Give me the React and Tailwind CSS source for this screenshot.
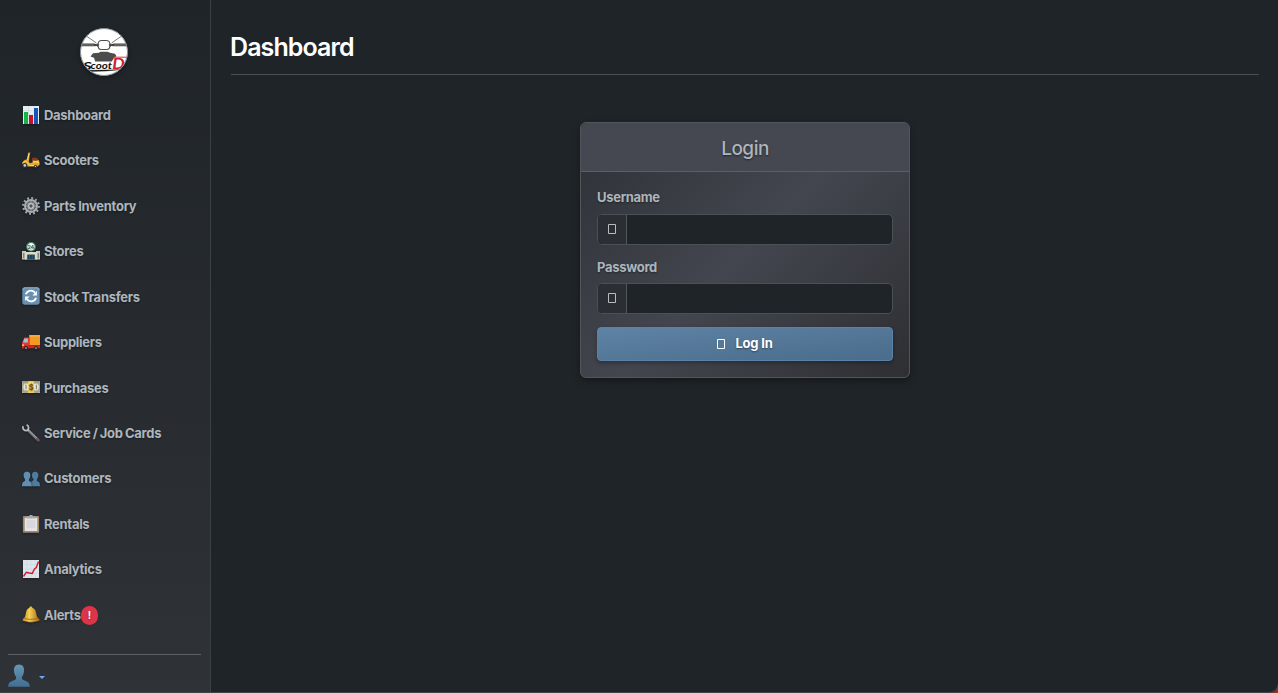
import React from "react";

function Icon({ children, className = "h-[18px] w-[18px]" }) {
  return (
    <svg viewBox="0 0 18 18" className={`${className} shrink-0 drop-shadow-[0_1px_1px_rgba(0,0,0,0.35)]`} fill="none">
      {children}
    </svg>
  );
}

const ChartBars = () => (
  <Icon>
    <path d="M1 0h16v18H1z" fill="#e6eef2" />
    <path d="M1 4.5h16M1 9h16M1 13.5h16M6.5 0v18M12 0v18" stroke="#c9d7df" strokeWidth=".5" />
    <path d="M2 6h4v12H2z" fill="#17b544" />
    <path d="M7 9h4v9H7z" fill="#cc1026" />
    <path d="M12 2h4v16h-4z" fill="#1458b4" />
  </Icon>
);

const Scooter = () => (
  <Icon>
    <path d="M5.2 2.8L7 .8l2 .8-1.4 2z" fill="#6b5637" />
    <path d="M6.2 2.2h1.8L7.2 8 6.8 11c1.2 1.4 2.6 1 3.7.2L10.8 8l6 1 1.1 4.2-2.3 2.4H5L3.6 12.4 0 13.2C.4 10 2.5 8.8 4.8 8.6z" fill="#dfa42f" />
    <path d="M7 2.5L5.5 9M.8 12c2-2.5 4.2-2 5.2.7l1.5 1.7H15" stroke="#ffd976" strokeWidth="1" />
    <path d="M11.5 11.5c1.5-1.5 4-1.3 5.2.6" stroke="#ffd370" strokeWidth="1.4" />
    <path d="M9.6 8.6l.9-1.8h4.7l1 2.5-3 .8z" fill="#8a3b1b" />
    <circle cx="2.8" cy="14.4" r="2.5" fill="#30333a" /><circle cx="2.8" cy="14.4" r="1.3" fill="#c7cace" />
    <circle cx="13.5" cy="15.4" r="1.7" fill="#393231" /><circle cx="13.5" cy="15.4" r=".7" fill="#c7cace" />
  </Icon>
);

const Gear = () => (
  <Icon>
    <circle cx="9" cy="9" r="7.8" stroke="#a3a8ad" strokeWidth="2.2" strokeDasharray="1.9 2.184" />
    <circle cx="9" cy="9" r="5.9" stroke="#a9aeb3" strokeWidth="2.2" />
    <circle cx="9" cy="9" r="4.7" fill="#73787e" />
    <path d="M9 4v3M9 11v3M4 9h3m4 0h3M5.5 5.5l2.2 2.2m2.6 2.6 2.2 2.2m0-7-2.2 2.2m-2.6 2.6-2.2 2.2" stroke="#989ea5" />
    <circle cx="9" cy="9" r="2.3" fill="#4c5359" stroke="#c6cbcf" strokeWidth="1.2" />
  </Icon>
);

const Store = () => (
  <Icon>
    <path d="M0 9h4v8.6H0zM14 9h4v8.6h-4z" fill="#cac8b8" />
    <path d="M3 10h12v7.6H3z" fill="#ddd9c6" />
    <path d="M5.2 12.6h7.6v5H5.2z" fill="#1d4260" />
    <path d="M7.5 12.6v5M10.3 12.6v5" stroke="#3c6580" strokeWidth=".7" />
    <path d="M1.8 11v5.2M16.2 11v5.2" stroke="#5d6b70" strokeWidth="1" />
    <circle cx="9" cy="4.8" r="4.3" fill="#f4faf7" stroke="#3b8a60" strokeWidth="1.2" />
    <text x="9" y="6.5" textAnchor="middle" fontSize="5" fontWeight="700" letterSpacing="0" fill="#4b5560" className="font-['Inter',sans-serif]">24</text>
  </Icon>
);

const Transfer = () => (
  <Icon>
    <rect x=".3" y=".3" width="17.4" height="17.4" rx="2.7" fill="#6990b1" />
    <path d="M.8 3Q.8.8 3 .8h12q2.2 0 2.2 2.2" stroke="#a4c0d8" strokeWidth=".7" />
    <path d="M3.9 7.3C5 3.7 9 2.5 12 4.8l1 1M14.1 10.7c-1.1 3.6-5.1 4.8-8.1 2.5l-1-1" stroke="#fff" strokeWidth="1.9" />
    <path d="M14.9 4v4.5h-4.5zM3.1 14V9.5h4.5z" fill="#fff" />
  </Icon>
);

const Truck = () => (
  <Icon>
    <path d="M7.3 2.2H18v10H7.3z" fill="#f39a24" />
    <path d="M7.3 2.2H18v1.3H7.3z" fill="#ffb84a" />
    <path d="M2.2 4.4h5.1v10.8H0V10z" fill="#e5382f" />
    <path d="M2.4 5.6h3.5v3.9H1z" fill="#8ec9e1" />
    <path d="M0 12.3h18v2.9H0z" fill="#dc1f20" />
    <path d="M0 12.2h2" stroke="#ffe47b" strokeWidth="1.3" />
    <circle cx="4" cy="15.1" r="2" fill="#27292f" /><circle cx="14" cy="15.1" r="2" fill="#27292f" />
    <circle cx="4" cy="15.1" r=".8" fill="#bbc" /><circle cx="14" cy="15.1" r=".8" fill="#bbc" />
  </Icon>
);

const Money = () => (
  <Icon>
    <path d="M0 3.2h18v11.8H0z" fill="#b8b6a0" />
    <path d="M1 4.2h16v9.8H1z" stroke="#858976" strokeWidth=".7" />
    <circle cx="4.6" cy="9" r="3.2" fill="#e9e5d4" /><circle cx="13.6" cy="9" r="3.2" fill="#e9e5d4" />
    <path d="M4 6.7v4.5M14.4 6.7v4.5" stroke="#777a67" />
    <path d="M6.2 3.2h5.6V15H6.2z" fill="#f5d365" />
    <text x="9" y="11.8" textAnchor="middle" fontSize="7.5" fontWeight="700" fill="#6d4d17" className="font-['Inter',sans-serif]">$</text>
  </Icon>
);

const Wrench = () => (
  <Icon>
    <path d="M5.8 5.8L16.2 16.2" stroke="#969da6" strokeWidth="2.5" strokeLinecap="round" />
    <path d="M1.1 2.1Q.2 5.4 2.9 6.4 6.3 7.1 6.6 4.1 6.7 1.7 4.6.8" stroke="#b5bcc3" strokeWidth="1.7" />
    <path d="M6.8 7.3l8.5 8.5" stroke="#5c626b" strokeWidth=".9" />
    <path d="M14.8 14.9l1.7 1.7" stroke="#704950" strokeWidth="1.9" strokeLinecap="round" />
  </Icon>
);

const userPath = "M9 .3c3 0 4.5 2.2 4.1 5.3-.2 1.9-.8 3.3-1.7 4.3-.2 1.7.3 2.4 2.1 3 2.8.9 4.1 1.8 4.4 4.9H.1c.3-3.1 1.6-4 4.4-4.9 1.8-.6 2.3-1.3 2.1-3-.9-1-1.5-2.4-1.7-4.3C4.5 2.5 6 .3 9 .3z";

const Users = () => (
  <Icon>
    <path d="M13 2.8c3 0 3.8 2.2 3.2 5-.3 1.2-.8 2-1.3 2.6 0 1.5.5 1.8 1.5 2.4 1.2.6 1.5 2 1.6 4.5H9.5V12.3c1.5-.5 2-.9 2-2C9.2 8 9.2 2.8 13 2.8z" fill="#4d7c9f" />
    <path d="M5 2.8c-3 0-3.8 2.2-3.2 5 .3 1.2.8 2 1.3 2.6 0 1.5-.5 1.8-1.5 2.4C.4 13.4.1 14.8 0 17.3h10c-.1-2.5-.4-3.9-1.6-4.5-1-.6-1.5-.9-1.5-2.4.5-.6 1-1.4 1.3-2.6.6-2.8-.2-5-3.2-5z" fill="#5f90b3" />
    <path d="M10 17.1v-3.8M9 8.8v3" stroke="#304e63" strokeWidth=".6" />
  </Icon>
);

const Clipboard = () => (
  <Icon>
    <rect x=".9" y="1" width="16.2" height="16.7" rx=".9" fill="#a18870" />
    <path d="M2.7 2.8h12.6v13.2H2.7z" fill="#e4e3e5" />
    <path d="M4.8 6h8.5m-8.5 2h8.5m-8.5 2h8.5m-8.5 2h8.5" stroke="#cbcbcf" strokeWidth=".9" />
    <path d="M4.5 3.5V1.4H7L7.7 0h2.6l.7 1.4h2.5v2.1z" fill="#a5a9ad" />
  </Icon>
);

const Trend = () => (
  <Icon>
    <path d="M1 0h16v18H1z" fill="#dce5eb" />
    <path d="M1 4.5h16M1 9h16M1 13.5h16M5 0v18M9 0v18M13 0v18" stroke="#c4d4df" strokeWidth=".5" />
    <path d="M1.5 16.5l2.8-4.3 3 .8 3 .4 2-4.2 2-1.6 2.2-6" stroke="#d21631" strokeWidth="1.4" />
  </Icon>
);

const Bell = () => (
  <Icon>
    <defs>
      <linearGradient id="bell-gold"><stop stopColor="#c2851f" /><stop offset=".4" stopColor="#f9cf52" /><stop offset="1" stopColor="#a06312" /></linearGradient>
    </defs>
    <ellipse cx="8.7" cy="15.2" rx="3" ry="1.5" fill="#6b512c" />
    <path d="M7.4 1.9C7.4 0 10.4 0 10.4 1.9c4.2 1 3.6 6.4 4.9 9.2.8 1.1 2.3 1.6 2.4 3.3-3 1.7-14.2 1.7-17.2 0 .1-1.7 1.6-2.2 2.4-3.3 1.3-2.8.5-8.2 4.5-9.2z" fill="url(#bell-gold)" />
    <path d="M2.4 12.3c4 1.4 9.2 1.4 13.2 0" stroke="#95601a" strokeWidth=".8" />
  </Icon>
);

function Logo() {
  return (
    <svg viewBox="0 0 48 48" className="h-12 w-12 rounded-full shadow-[0_2px_4px_rgba(0,0,0,0.35)]">
      <defs><clipPath id="logo-circle"><circle cx="24" cy="24" r="23.5" /></clipPath></defs>
      <circle cx="24" cy="24" r="24" fill="#fff" />
      <g clipPath="url(#logo-circle)">
        <path d="M7 8.5l9.5 6.5M41 8.5l-9.5 6.5" stroke="#5b5b5b" strokeWidth=".8" />
        <path d="M0 15.5h14l3 .8 2-3h10l2 3 3-.8h14v2.8H34l-3-.3-2 3.5H19l-2-3.5-3 .3H0z" fill="#424242" />
        <path d="M0 17h14M34 17h14" stroke="#a6a6a6" strokeWidth=".6" />
        <rect x="18.3" y="12.5" width="11.4" height="9" rx="2.8" fill="#fff" stroke="#4a4a4a" strokeWidth="1" />
        <path d="M10.5 28.5l2.5-3.2 6-.6 1.5-1h7l2.5 1 5 1 1.5 2.5-3 1.5-1.5 3.8H15.2L14 29.8z" fill="#4c4c4c" />
        <text x="10.5" y="41" fontSize="10" fontStyle="italic" fontWeight="700" textLength="21.5" lengthAdjust="spacingAndGlyphs" fill="#111" className="font-['Lato',sans-serif]">coot</text>
        <text x="2.8" y="41.5" fontSize="12" fontStyle="italic" fontWeight="700" textLength="9" lengthAdjust="spacingAndGlyphs" fill="#111" className="font-['Lato',sans-serif]">S</text>
        <text x="32.2" y="40.5" fontSize="15" fontStyle="italic" fontWeight="700" textLength="12.5" lengthAdjust="spacingAndGlyphs" fill="#d01f31" className="font-['Lato',sans-serif]">D</text>
        <path d="M4 41.5l8 .8 27-.6-13 1.3-17 .5z" fill="#111" stroke="#111" strokeWidth=".4" />
        <path d="M32.5 32l1.5-2.8h13" stroke="#d01f31" strokeWidth=".9" fill="none" />
      </g>
      <circle cx="24" cy="24" r="23.5" fill="none" stroke="#7d858a" strokeWidth="1" />
    </svg>
  );
}

const items = [
  ["Dashboard", ChartBars],
  ["Scooters", Scooter],
  ["Parts Inventory", Gear],
  ["Stores", Store],
  ["Stock Transfers", Transfer],
  ["Suppliers", Truck],
  ["Purchases", Money],
  ["Service / Job Cards", Wrench],
  ["Customers", Users],
  ["Rentals", Clipboard],
  ["Analytics", Trend],
  ["Alerts", Bell],
];

function Sidebar() {
  return (
    <aside className="flex h-full w-[211px] shrink-0 flex-col border-r border-[#3c4045] bg-linear-to-b from-[#1f2428] to-[#2f3236] pt-7">
      <div className="flex w-[208px] justify-center"><Logo /></div>
      <nav className="mt-4 flex flex-col">
        {items.map(([label, Glyph]) => (
          <a key={label} className="flex h-[45.44px] items-center pl-[22px] text-[13px] font-[650] tracking-[-0.29px] text-[#adb5bd] [text-shadow:0_1px_2px_rgba(0,0,0,0.4)] [word-spacing:-0.5px]">
            <Glyph />
            <span className="ml-1 pt-0.5 whitespace-nowrap">{label}</span>
            {label === "Alerts" && (
              <span className="mt-px flex h-[19px] w-[17px] items-center justify-center rounded-full bg-[#dc3549] text-[10px] font-bold text-white">!</span>
            )}
          </a>
        ))}
      </nav>
      <div className="mt-[17px] ml-2 mr-[9px] flex border-t border-[#5c6064] pt-[9px]">
        <svg viewBox="0 0 18 18" className="h-[23px] w-[22px]" preserveAspectRatio="none">
          <defs><linearGradient id="user-blue" x2="0" y2="1"><stop stopColor="#6796b4" /><stop offset="1" stopColor="#416e91" /></linearGradient></defs>
          <path d={userPath} fill="url(#user-blue)" />
        </svg>
        <svg viewBox="0 0 6 3" className="ml-[9px] mt-3 h-[3px] w-1.5"><path d="M0 0h6L3 3z" fill="#6ea8fe" /></svg>
      </div>
    </aside>
  );
}

function MissingGlyph({ className }) {
  return <svg viewBox="0 0 8 10" className={`h-2.5 w-2 ${className}`}><path d="M.5.5h7v9h-7z" fill="none" stroke="currentColor" /></svg>;
}

function Field({ label, type }) {
  return (
    <>
      <label className="block h-5 text-[13px] leading-5 font-[650] tracking-[-0.3px] text-[#adb5bd] [text-shadow:0_1px_2px_rgba(0,0,0,0.4)]">{label}</label>
      <div className="flex h-[31px] overflow-hidden rounded-[5px] border border-[#495057] bg-[#1f2428]">
        <span className="flex w-[29px] shrink-0 items-center justify-center border-r border-[#52585e] bg-[#2b2f33] text-[#b7bdc2]"><MissingGlyph className="-mt-0.5" /></span>
        <input type={type} aria-label={label} className="min-w-0 flex-1 bg-transparent px-2 text-[13px] text-[#adb5bd] outline-none" />
      </div>
    </>
  );
}

export default function App() {
  return (
    <div className="relative flex h-[693px] w-full overflow-hidden bg-[#1f2428] font-['Inter',sans-serif]">
      <Sidebar />
      <main className="flex flex-1 flex-col pr-[19px] pl-5">
        <h1 className="-indent-px flex h-[75px] items-center border-b border-[#494e52] pt-[21px] text-[25px] font-semibold tracking-[-0.92px] text-white">Dashboard</h1>
        <section className="mt-[47px] flex h-64 w-[330px] flex-col self-center overflow-hidden rounded-[6px] border border-[#51565c] bg-[linear-gradient(135deg,#2d3035_0%,#43464e_50%,#2d2f33_100%)] shadow-[0_3px_7px_rgba(0,0,0,0.32)]">
          <h2 className="flex h-[49px] shrink-0 items-center justify-center border-b border-[#5a5f66] bg-[#454850] pt-1 text-[19px] font-medium tracking-[-0.5px] text-[#adb5bd] [text-shadow:0_1px_2px_rgba(0,0,0,0.5)]">Login</h2>
          <form className="flex flex-col px-4 pt-[15px]">
            <div className="flex flex-col gap-[7px]"><Field label="Username" type="text" /></div>
            <div className="mt-3 flex flex-col gap-1.5"><Field label="Password" type="password" /></div>
            <button type="button" className="mt-[13px] flex h-[34px] items-center justify-center rounded-[4px] border border-[#5b83aa] bg-linear-to-br from-[#5e83a5] to-[#4b6c8b] text-[13px] font-[650] tracking-[-0.2px] text-white shadow-[0_2px_4px_rgba(0,0,0,0.3)] [text-shadow:0_1px_2px_rgba(0,0,0,0.45)]">
              <MissingGlyph className="mr-2.5" />Log In
            </button>
          </form>
        </section>
      </main>
      <div className="pointer-events-none absolute inset-x-0 bottom-0 h-px bg-[#424049]" />
      <svg viewBox="0 0 8 8" className="absolute right-0 bottom-0 h-2 w-2"><path d="M8 1Q7 7 0 8h8z" fill="#9b3517" /><path d="M8 0Q7 6 0 7.5" fill="none" stroke="#434650" /></svg>
    </div>
  );
}
